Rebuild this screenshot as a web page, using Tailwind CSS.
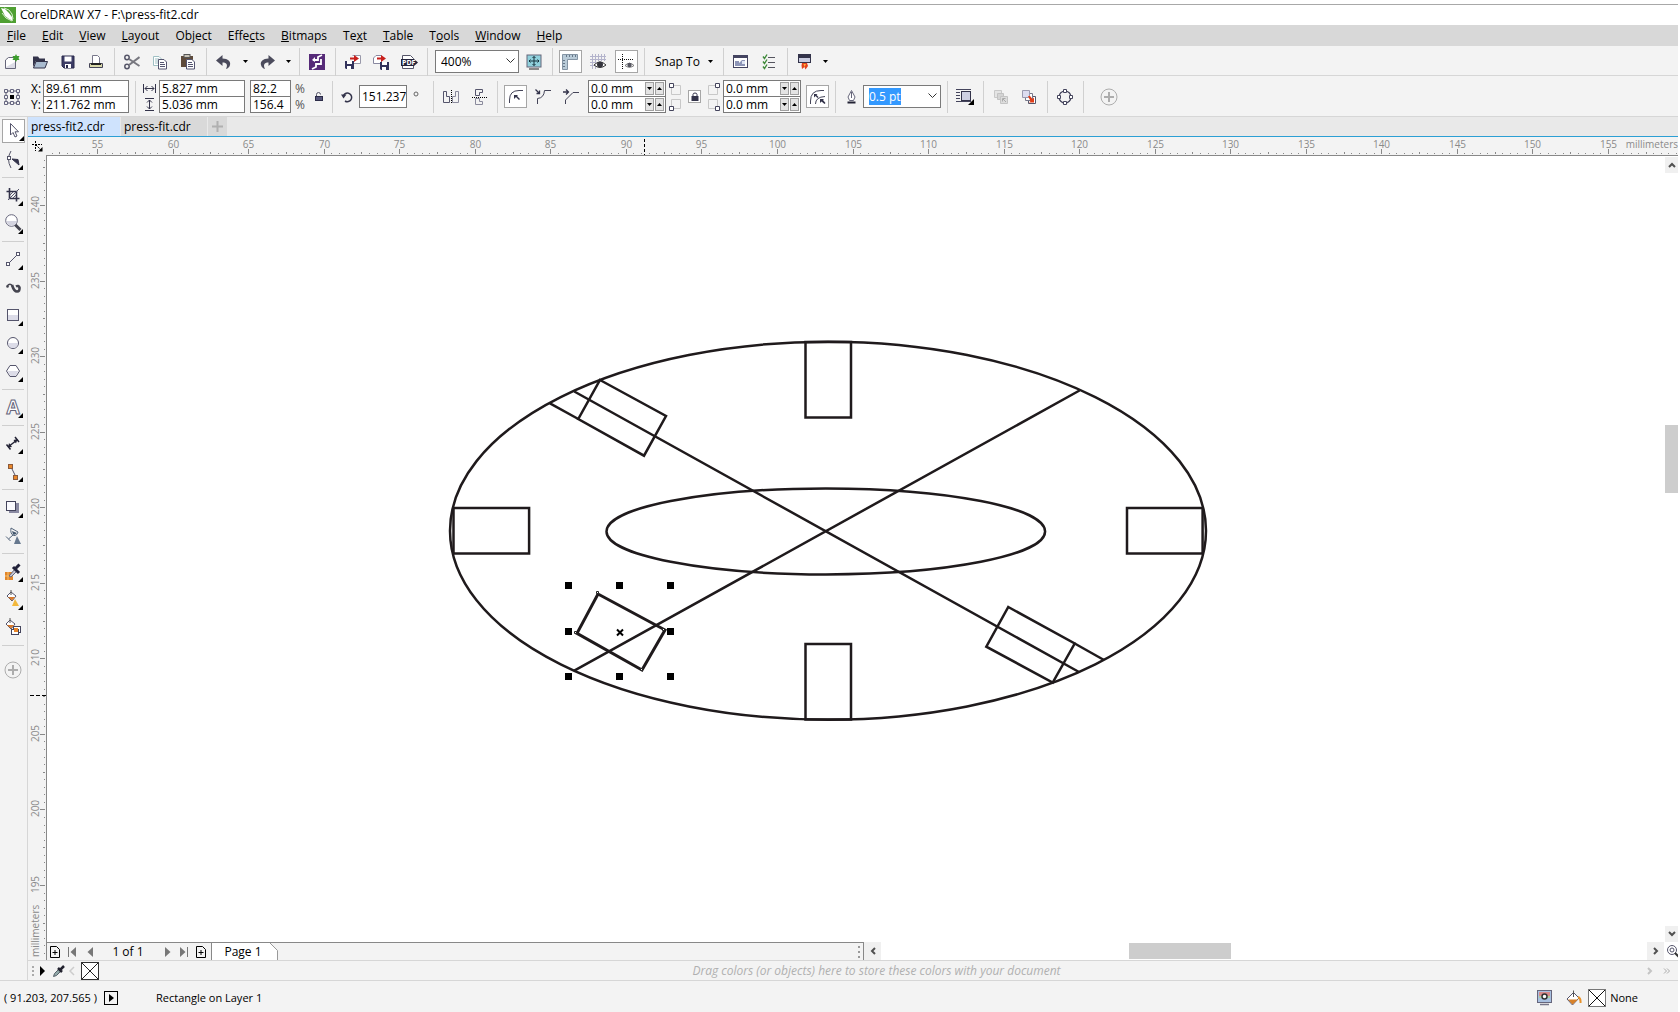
<!DOCTYPE html>
<html lang="en">
<head>
    <meta charset="UTF-8">
    <title>CorelDRAW X7 - F:\press-fit2.cdr</title>
    <script src="https://cdn.jsdelivr.net/npm/@tailwindcss/browser@4"></script>
</head>
<body class="h-screen flex flex-col overflow-hidden bg-white pr-0.5 font-['Open_Sans','Noto_Sans',sans-serif] text-xs text-black">

    <!-- Title bar -->
    <header class="mt-1 h-[21px] shrink-0 flex items-center gap-1 border-t border-[#a8a8a8] bg-white">
        <svg class="w-4 h-4 shrink-0" viewBox="0 0 16 16"><rect width="16" height="16" fill="#4fa032"/><path d="M1 1L5 2L9 6L12 10L13 14L9 12L5 9Z" fill="#fff"/><path d="M4 1L9 3L12 7L13 12M2 6L6 11L12 14" stroke="#d9efcf" fill="none"/></svg>
        <h1>CorelDRAW X7 - F:\press-fit2.cdr</h1>
    </header>

    <!-- Menu bar -->
    <nav class="h-[21px] shrink-0 flex items-center gap-4 pl-[7px] bg-[#d8d8d8]">
        <button><u>F</u>ile</button>
        <button><u>E</u>dit</button>
        <button><u>V</u>iew</button>
        <button><u>L</u>ayout</button>
        <button>Ob<u>j</u>ect</button>
        <button>Effe<u>c</u>ts</button>
        <button><u>B</u>itmaps</button>
        <button>Te<u>x</u>t</button>
        <button><u>T</u>able</button>
        <button>T<u>o</u>ols</button>
        <button><u>W</u>indow</button>
        <button><u>H</u>elp</button>
    </nav>

    <!-- Standard toolbar -->
    <div class="h-[30px] shrink-0 flex items-center pt-0.5 -ml-0.5 bg-[#f3f3f3] border-b border-[#d6d6d6]">
        <button aria-label="New" class="w-7 h-7 grid place-items-center"><svg width="16" height="16" viewBox="0 0 16 16"><path d="M1.500 14.500V6L4.500 3.500H11.500V14.500Z" fill="#fdfdfd" stroke="#66667a"/><path d="M2 13L11 8V14H2Z" fill="#dcdce6"/><path d="M12 0L13 2L15.500 2L14.500 4L15.500 6L13 6L12 8L11 6L8.500 6L9.500 4L8.500 2L11 2Z" fill="#3c9c2c"/></svg></button>
        <button aria-label="Open" class="w-7 h-7 grid place-items-center"><svg width="16" height="16" viewBox="0 0 16 16"><path d="M1 13V2.500H6L7.500 4.500H13V7H4Z" fill="#33334a"/><path d="M4 7.500H15.500L13 14H1.500Z" fill="#a9bbcf" stroke="#33334a"/></svg></button>
        <button aria-label="Save" class="w-7 h-7 grid place-items-center"><svg width="14" height="14" viewBox="0 0 14 14"><path d="M1 1H13V13H3L1 11Z" fill="#3d3d66" stroke="#28284a"/><rect x="3.500" y="1.500" width="7" height="5" fill="#fff"/><rect x="4" y="9" width="6" height="4" fill="#fff"/><rect x="5" y="10" width="2" height="3" fill="#28284a"/></svg></button>
        <button aria-label="Print" class="w-7 h-7 grid place-items-center"><svg width="16" height="16" viewBox="0 0 16 16"><path d="M4.500 9V1.500H9.500L11.500 3.500V9" fill="#fff" stroke="#77778a"/><path d="M1.500 9.500H14.500V13.500H1.500Z" fill="#d8d8a8" stroke="#444458"/><path d="M3 10H13" stroke="#222" stroke-width="2"/></svg></button>
        <i class="w-px h-7 ml-1 mr-[3px] bg-[#d0d0d0]"></i>
        <button aria-label="Cut" class="w-7 h-7 grid place-items-center"><svg width="16" height="16" viewBox="0 0 16 16" fill="none"><circle cx="3" cy="3.500" r="2.200" stroke="#555568" stroke-width="1.500"/><circle cx="3" cy="12.500" r="2.200" stroke="#555568" stroke-width="1.500"/><path d="M5 5L15.500 12M5 11L15.500 3" stroke="#77777f" stroke-width="2"/></svg></button>
        <button aria-label="Copy" class="w-7 h-7 grid place-items-center"><svg width="16" height="16" viewBox="0 0 16 16" fill="#fff"><path d="M1.500 2.500H7L9.500 5V11.500H1.500Z" stroke="#9fc0c4"/><path d="M3 5H7M3 7H6M3 9H6" stroke="#9fc0c4"/><path d="M6.500 5.500H12L14.500 8V15H6.500Z" stroke="#555570"/><path d="M8 8.500H12M8 10.500H13M8 12.500H13" stroke="#555570"/></svg></button>
        <button aria-label="Paste" class="w-7 h-7 grid place-items-center"><svg width="16" height="16" viewBox="0 0 16 16"><rect x="1" y="2" width="12" height="11" fill="#5e4a3a"/><rect x="4" y="0.500" width="6" height="3" fill="#c9c4b8" stroke="#555"/><path d="M6.500 5.500H12L14.500 8V15H6.500Z" fill="#fff" stroke="#555570"/><path d="M8 8.500H12M8 10.500H13M8 12.500H13" stroke="#555570"/></svg></button>
        <i class="w-px h-7 ml-1 mr-[3px] bg-[#d0d0d0]"></i>
        <button aria-label="Undo" class="w-7 h-7 grid place-items-center"><svg width="16" height="16" viewBox="0 0 16 16"><path d="M0 6.500L6.500 1V4.500C12 4.500 15 7.500 14 11C13.500 13 12 14.500 10 15C12 11 11 8.500 6.500 8.500V12Z" fill="#4b4b5c"/></svg></button>
        <button aria-label="Undo history" class="w-[15px] h-7 grid place-items-center"><svg width="5" height="3"><path d="M0 0H5L2.500 3Z"/></svg></button>
        <button aria-label="Redo" class="w-7 h-7 grid place-items-center"><svg width="16" height="16" viewBox="0 0 16 16"><path d="M16 6.500L9.500 1V4.500C4 4.500 1 7.500 2 11C2.500 13 4 14.500 6 15C4 11 5 8.500 9.500 8.500V12Z" fill="#4b4b5c"/></svg></button>
        <button aria-label="Redo history" class="w-3.5 h-7 grid place-items-center"><svg width="5" height="3"><path d="M0 0H5L2.500 3Z"/></svg></button>
        <i class="w-px h-7 ml-1 mr-[3px] bg-[#d0d0d0]"></i>
        <button aria-label="Search content" class="w-7 h-7 grid place-items-center"><svg width="16" height="16" viewBox="0 0 16 16" fill="none"><rect width="16" height="16" fill="#562a78"/><path d="M13 1L9 3V6H4M3 15L7 13V10H12V5" stroke="#fff" stroke-width="1.800"/><path d="M3 6L6 3V8Z" fill="#fff"/></svg></button>
        <i class="w-px h-7 ml-1 mr-[3px] bg-[#d0d0d0]"></i>
        <button aria-label="Import" class="w-7 h-7 grid place-items-center"><svg width="16" height="16" viewBox="0 0 16 16"><path d="M7.500 1.500H15.500V9.500H9" fill="#fff" stroke="#9999aa"/><path d="M0 7H9V15H1L0 14Z" fill="#33335c"/><rect x="2" y="7" width="5" height="3" fill="#fff"/><rect x="2" y="12" width="4" height="3" fill="#fff"/><path d="M5 3.500H9V1L14 4.500L9 8V5.500H5Z" fill="#c8201c"/></svg></button>
        <button aria-label="Export" class="w-7 h-7 grid place-items-center"><svg width="16" height="16" viewBox="0 0 16 16"><path d="M0.500 9.500V4L3 1.500H8.500V9.500Z" fill="#fff" stroke="#8888a0"/><path d="M7 8H16V16H8L7 15Z" fill="#33335c"/><rect x="9" y="8" width="5" height="3" fill="#fff"/><rect x="9" y="13" width="4" height="3" fill="#fff"/><path d="M4 3.500H8V1L13 4.500L8 8V5.500H4Z" fill="#c8201c"/></svg></button>
        <button aria-label="Publish to PDF" class="w-7 h-7 grid place-items-center"><svg width="17" height="16" viewBox="0 0 17 16"><path d="M1.500 14.500V1.500H9.500L12.500 4.500V14.500Z" fill="#fff" stroke="#555568"/><path d="M0 5H13L17 8.500L13 12H0Z" fill="#23233a"/><text x="1" y="11" font-size="7" font-weight="700" fill="#fff">PDF</text></svg></button>
        <i class="w-px h-7 ml-1 mr-[3px] bg-[#d0d0d0]"></i>
        <div class="relative ml-1 w-[84px]">
            <select aria-label="Zoom level" class="w-full h-[23px] pl-[5px] appearance-none bg-white border border-[#7a7a7a]"><option>400%</option><option>200%</option><option>100%</option></select>
            <svg class="absolute right-1 top-2 pointer-events-none" width="9" height="6" fill="none"><path d="M0.500 0.500L4.500 4.500L8.500 0.500" stroke="#333"/></svg>
        </div>
        <button aria-label="Full screen preview" class="ml-px w-7 h-7 grid place-items-center"><svg width="16" height="16" viewBox="0 0 16 16"><rect x="1" y="1" width="14" height="12" fill="#8fd0dc" stroke="#66667a"/><path d="M8 2.500V11.500M3 7H13M6.500 4L8 2.500L9.500 4M6.500 10L8 11.500L9.500 10M4.500 5.500L3 7L4.500 8.500M11.500 5.500L13 7L11.500 8.500" stroke="#16323c" fill="none"/><path d="M3 15H13" stroke="#666" stroke-width="1.500"/></svg></button>
        <i class="w-px h-7 ml-1 mr-[3px] bg-[#d0d0d0]"></i>
        <div class="w-7 flex justify-center"><button aria-label="Show rulers" class="w-[23px] h-[23px] grid place-items-center bg-white border border-[#a6a6a6]"><svg width="16" height="16" viewBox="0 0 16 16"><path d="M0.500 0.500H15.500V5.500H5.500V15.500H0.500Z" fill="#b9cbd8" stroke="#8494a4"/><path d="M4.500 1V3M7.500 1V3M10.500 1V3M13.500 1V3M1 6.500H3M1 9.500H3M1 12.500H3" stroke="#667788"/></svg></button></div>
        <button aria-label="Show grid" class="w-7 h-7 grid place-items-center"><svg width="16" height="16" viewBox="0 0 16 16" fill="none"><path d="M2.500 0V15M5.500 0V15M8.500 0V7M11.500 0V7M14.500 0V7M0 2.500H16M0 5.500H16M0 8.500H5M0 11.500H5" stroke="#b4b4cc"/><path d="M4 11Q10 5 16 11Q10 16 4 11Z" fill="#fff" stroke="#333"/><circle cx="10" cy="10.500" r="3" fill="#33333c"/></svg></button>
        <div class="w-7 flex justify-center"><button aria-label="Show guidelines" class="w-[23px] h-[23px] grid place-items-center bg-white border border-[#a6a6a6]"><svg width="16" height="16" viewBox="0 0 16 16" fill="none"><path d="M4.500 0V16M0 5.500H16" stroke="#111" stroke-dasharray="1 1"/><path d="M7 11.500Q11.500 7 16 11.500Q11.500 15 7 11.500Z" fill="#fff" stroke="#777"/><circle cx="11.500" cy="11" r="2.200" fill="#555560"/></svg></button></div>
        <i class="w-px h-7 ml-1 mr-[3px] bg-[#d0d0d0]"></i>
        <button class="w-[71px] h-7 pl-[7px] pr-1.5 flex items-center justify-between whitespace-nowrap">Snap To <svg width="5" height="3"><path d="M0 0H5L2.500 3Z"/></svg></button>
        <i class="w-px h-7 ml-1 mr-[3px] bg-[#d0d0d0]"></i>
        <button aria-label="Welcome screen" class="w-7 h-7 grid place-items-center"><svg width="16" height="16" viewBox="0 0 16 16"><rect x="0.500" y="1.500" width="14" height="12" fill="#fff" stroke="#444460"/><rect x="1" y="1" width="13" height="3" fill="#444460"/><path d="M2 12V7H6V9L9 6H12V12Z" fill="#8e96b8"/><rect x="9" y="7" width="3" height="3" fill="#dfe6f4"/></svg></button>
        <button aria-label="Options" class="w-7 h-7 grid place-items-center"><svg width="14" height="16" viewBox="0 0 14 16" fill="none"><path d="M6 3.500H13M6 8.500H13M6 13.500H13" stroke="#55555f"/><path d="M1 2.500L2.500 4.500L5 0.500M1 7.500L2.500 9.500L5 5.500M1 12.500L2.500 14.500L5 10.500" stroke="#3f8a3a" stroke-width="1.400"/></svg></button>
        <i class="w-px h-7 ml-1 mr-[3px] bg-[#d0d0d0]"></i>
        <button aria-label="Application launcher" class="w-7 h-7 grid place-items-center"><svg width="14" height="16" viewBox="0 0 14 16"><rect x="0.500" y="0.500" width="12" height="8" fill="#c9cce0" stroke="#33334a"/><rect x="1" y="1" width="11" height="3" fill="#33334a"/><path d="M4 9H9L10 12L7.500 15.500L6.500 13L4 15L3.500 11.500Z" fill="#e2401c"/><path d="M5.500 10H8L6.500 13Z" fill="#ffb13c"/></svg></button>
        <button aria-label="Launcher list" class="w-3 h-7 grid place-items-center"><svg width="5" height="3"><path d="M0 0H5L2.500 3Z"/></svg></button>
    </div>

    <!-- Property bar -->
    <div class="h-[41px] shrink-0 flex items-center pt-px bg-[#f3f3f3] border-b border-[#d6d6d6]">
        <button aria-label="Object origin" class="w-6 h-8 grid place-items-center"><svg width="16" height="16" viewBox="0 0 16 16" fill="none"><path d="M4 2H6M10 2H12M4 14H6M10 14H12M2 4V6M2 10V12M14 4V6M14 10V12" stroke="#555568"/><path d="M0.500 0.500H3.500V3.500H0.500ZM6.500 0.500H9.500V3.500H6.500ZM12.500 0.500H15.500V3.500H12.500ZM0.500 6.500H3.500V9.500H0.500ZM12.500 6.500H15.500V9.500H12.500ZM0.500 12.500H3.500V15.500H0.500ZM6.500 12.500H9.500V15.500H6.500ZM12.500 12.500H15.500V15.500H12.500Z" stroke="#666680"/><rect x="6" y="6" width="4" height="4" fill="#000"/></svg></button>
        <div class="ml-[7px] w-3 flex flex-col leading-4"><label for="posX">X:</label><label for="posY">Y:</label></div>
        <div class="w-[86px] h-[33px] grid grid-rows-2 border border-[#7a7a7a] divide-y divide-[#7a7a7a] bg-white">
            <input id="posX" class="min-w-0 w-full pl-0.5 leading-[15px]" value="89.61 mm">
            <input id="posY" class="min-w-0 w-full pl-0.5 leading-[15px]" value="211.762 mm">
        </div>
        <i class="w-px h-8 ml-1.5 mr-[7px] bg-[#d0d0d0]"></i>
        <div class="w-4 h-[33px] grid grid-rows-2 items-center">
            <svg width="13" height="9" viewBox="0 0 13 9" fill="none"><path d="M0.500 0V9M12.500 0V9M2 4.500H11M4.500 2L2 4.500L4.500 7M8.500 2L11 4.500L8.500 7" stroke="#33334a"/></svg>
            <svg class="ml-0.5" width="9" height="13" viewBox="0 0 9 13" fill="none"><path d="M0 0.500H9M0 12.500H9M4.500 2V11M2 4.500L4.500 2L7 4.500M2 8.500L4.500 11L7 8.500" stroke="#33334a"/></svg>
        </div>
        <div class="w-[86px] h-[33px] grid grid-rows-2 border border-[#7a7a7a] divide-y divide-[#7a7a7a] bg-white">
            <input aria-label="Width" class="min-w-0 w-full pl-0.5 leading-[15px]" value="5.827 mm">
            <input aria-label="Height" class="min-w-0 w-full pl-0.5 leading-[15px]" value="5.036 mm">
        </div>
        <div class="ml-[5px] w-[41px] h-[33px] grid grid-rows-2 border border-[#7a7a7a] divide-y divide-[#7a7a7a] bg-white">
            <input id="scaleX" class="min-w-0 w-full pl-0.5 leading-[15px]" value="82.2">
            <input id="scaleY" class="min-w-0 w-full pl-0.5 leading-[15px]" value="156.4">
        </div>
        <div class="ml-1 w-3 flex flex-col leading-4 text-[#555]"><label for="scaleX">%</label><label for="scaleY">%</label></div>
        <button aria-label="Lock ratio" class="w-6 h-8 grid place-items-center"><svg width="8" height="9" viewBox="0 0 8 9"><path d="M1.500 5V2.500Q1.500 0.500 3.500 0.500T5.500 2.500" fill="none" stroke="#555568"/><rect x="0.500" y="4.500" width="7" height="4" fill="#55557a" stroke="#2c2c48"/></svg></button>
        <i class="w-px h-8 ml-px mr-1 bg-[#d0d0d0]"></i>
        <svg class="ml-1 mr-1.5" width="12" height="12" viewBox="0 0 12 12" fill="none"><path d="M2.500 4.500A4.300 4.300 0 1 1 4 10" stroke="#33334a" stroke-width="1.500"/><path d="M0 3.500H5.500L2.500 7.500Z" fill="#33334a"/></svg>
        <input aria-label="Angle of rotation" class="w-12 h-[23px] pl-0.5 bg-white border border-[#7a7a7a]" value="151.237">
        <svg class="ml-1.5 mb-1.5 self-center" width="6" height="6" fill="none"><circle cx="3" cy="3" r="2" stroke="#666"/></svg>
        <i class="w-px h-8 ml-[14px] mr-[3px] bg-[#d0d0d0]"></i>
        <button aria-label="Mirror horizontally" class="w-7 h-8 grid place-items-center"><svg width="16" height="14" viewBox="0 0 16 14" fill="none"><path d="M0.500 1.500H3.500V6.500H6.500V12.500H0.500Z" stroke="#55556c"/><path d="M15.500 1.500H12.500V6.500H9.500V12.500H15.500Z" stroke="#8a8a9c"/><path d="M8.500 0V14" stroke="#000" stroke-dasharray="1 1"/></svg></button>
        <button aria-label="Mirror vertically" class="w-7 h-8 grid place-items-center"><svg width="15" height="16" viewBox="0 0 15 16" fill="none"><path d="M3.500 0.500H10.500V3.500H7.500V6.500H3.500Z" stroke="#55556c"/><path d="M3.500 15.500H10.500V12.500H7.500V9.500H3.500Z" stroke="#8a8a9c"/><path d="M0 8.500H15" stroke="#000" stroke-dasharray="1 1"/></svg></button>
        <i class="w-px h-8 ml-1 mr-[3px] bg-[#d0d0d0]"></i>
        <div class="w-7 flex justify-center"><button aria-label="Round corner" class="w-[23px] h-[23px] grid place-items-center bg-white border border-[#a6a6a6]"><svg width="15" height="15" viewBox="0 0 15 15" fill="none"><path d="M1.500 14V11Q1.500 1.500 11 1.500H15" stroke="#444458"/><path d="M6 6H10L9 7L12 10L11 11L8 8L6 10Z" fill="#33334a"/></svg></button></div>
        <button aria-label="Scalloped corner" class="w-7 h-8 grid place-items-center"><svg width="16" height="15" viewBox="0 0 16 15" fill="none"><path d="M2.500 15V9.500Q9 9 9.500 1.500H16" stroke="#444458"/><path d="M0.500 0.500L4 4M4.500 1.500V4.500H1.500" stroke="#33334a" stroke-width="1.300"/></svg></button>
        <button aria-label="Chamfered corner" class="w-7 h-8 grid place-items-center"><svg width="16" height="15" viewBox="0 0 16 15" fill="none"><path d="M2.500 15V11L10 3.500H16" stroke="#444458"/><path d="M0 3H5M3 0.500L5.500 3L3 5.500" stroke="#33334a" stroke-width="1.300"/></svg></button>
        <div class="ml-[3px] w-[78px] h-[33px] grid grid-cols-1 grid-rows-2 border border-[#7a7a7a] divide-y divide-[#7a7a7a] bg-white">
            <div class="flex items-center gap-px pr-px"><input aria-label="Top left radius" class="min-w-0 w-0 grow pl-0.5 leading-[15px]" value="0.0 mm"><button aria-label="Less" class="w-[9px] h-[13px] shrink-0 grid place-items-center bg-[#e4e4e4] border border-[#a0a0a0]"><svg width="5" height="3"><path d="M0 0H5L2.500 3Z"/></svg></button><button aria-label="More" class="w-[9px] h-[13px] shrink-0 grid place-items-center bg-[#e4e4e4] border border-[#a0a0a0]"><svg width="5" height="3"><path d="M0 3H5L2.500 0Z"/></svg></button></div>
            <div class="flex items-center gap-px pr-px"><input aria-label="Bottom left radius" class="min-w-0 w-0 grow pl-0.5 leading-[15px]" value="0.0 mm"><button aria-label="Less" class="w-[9px] h-[13px] shrink-0 grid place-items-center bg-[#e4e4e4] border border-[#a0a0a0]"><svg width="5" height="3"><path d="M0 0H5L2.500 3Z"/></svg></button><button aria-label="More" class="w-[9px] h-[13px] shrink-0 grid place-items-center bg-[#e4e4e4] border border-[#a0a0a0]"><svg width="5" height="3"><path d="M0 3H5L2.500 0Z"/></svg></button></div>
        </div>
        <svg class="ml-[3px]" width="13" height="28" viewBox="0 0 13 28" fill="none"><path d="M2.500 2.500H11.500V11.500H2.500ZM2.500 16.500H11.500V25.500H2.500Z" stroke="#c8c8c8"/><path d="M0.500 0.500H4.500V4.500H0.500ZM0.500 23.500H4.500V27.500H0.500Z" fill="#fff" stroke="#44445c"/></svg>
        <button aria-label="Edit corners together" class="mx-1.5 w-[13px] h-[13px] grid place-items-center bg-white border border-[#a6a6a6]"><svg width="8" height="9" viewBox="0 0 8 9"><path d="M2 4V2.500Q2 1 4 1T6 2.500V4" fill="none" stroke="#33334a"/><rect x="0.500" y="4" width="7" height="5" fill="#33334a"/></svg></button>
        <svg class="mr-[3px]" width="13" height="28" viewBox="0 0 13 28" fill="none"><path d="M1.500 2.500H10.500V11.500H1.500ZM1.500 16.500H10.500V25.500H1.500Z" stroke="#c8c8c8"/><path d="M8.500 0.500H12.500V4.500H8.500ZM8.500 23.500H12.500V27.500H8.500Z" fill="#fff" stroke="#44445c"/></svg>
        <div class="w-[78px] h-[33px] grid grid-cols-1 grid-rows-2 border border-[#7a7a7a] divide-y divide-[#7a7a7a] bg-white">
            <div class="flex items-center gap-px pr-px"><input aria-label="Top right radius" class="min-w-0 w-0 grow pl-0.5 leading-[15px]" value="0.0 mm"><button aria-label="Less" class="w-[9px] h-[13px] shrink-0 grid place-items-center bg-[#e4e4e4] border border-[#a0a0a0]"><svg width="5" height="3"><path d="M0 0H5L2.500 3Z"/></svg></button><button aria-label="More" class="w-[9px] h-[13px] shrink-0 grid place-items-center bg-[#e4e4e4] border border-[#a0a0a0]"><svg width="5" height="3"><path d="M0 3H5L2.500 0Z"/></svg></button></div>
            <div class="flex items-center gap-px pr-px"><input aria-label="Bottom right radius" class="min-w-0 w-0 grow pl-0.5 leading-[15px]" value="0.0 mm"><button aria-label="Less" class="w-[9px] h-[13px] shrink-0 grid place-items-center bg-[#e4e4e4] border border-[#a0a0a0]"><svg width="5" height="3"><path d="M0 0H5L2.500 3Z"/></svg></button><button aria-label="More" class="w-[9px] h-[13px] shrink-0 grid place-items-center bg-[#e4e4e4] border border-[#a0a0a0]"><svg width="5" height="3"><path d="M0 3H5L2.500 0Z"/></svg></button></div>
        </div>
        <button aria-label="Relative corner scaling" class="ml-[5px] w-[23px] h-[23px] grid place-items-center bg-white border border-[#a6a6a6]"><svg width="17" height="16" viewBox="0 0 17 16" fill="none"><path d="M1.500 15V12Q1.500 1.500 12 1.500H15M6.500 15Q6.500 8 16 7.500" stroke="#444458"/><path d="M5 5H8.500L7.500 6L9.500 8L8.500 9L6.500 7L5 8.500ZM11 10H15L14 11L16.500 14L15.500 15L12.500 12.500L11 14Z" fill="#33334a"/></svg></button>
        <i class="w-px h-8 ml-1.5 mr-1 bg-[#d0d0d0]"></i>
        <svg class="mx-[7px]" width="9" height="14" viewBox="0 0 9 14" fill="none"><path d="M4.500 0.500L8 7L6.500 10.500H2.500L1 7Z" fill="#fff" stroke="#66667a"/><path d="M4.500 2V8" stroke="#66667a"/><path d="M0.500 12.500H8.500" stroke="#222234" stroke-width="2"/></svg>
        <div class="relative w-[78px]">
            <input id="outlineWidth" aria-label="Outline width" class="w-full h-[23px] pl-[5px] bg-white border border-[#7a7a7a] outline-none selection:bg-[#3399ff] selection:text-white" value="0.5 pt">
            <button aria-label="Outline widths" class="absolute right-1 top-2"><svg width="9" height="6" fill="none"><path d="M0.500 0.500L4.500 4.500L8.500 0.500" stroke="#333"/></svg></button>
        </div>
        <i class="w-px h-8 ml-1.5 mr-[3px] bg-[#d0d0d0]"></i>
        <button aria-label="Wrap text" class="w-7 h-8 grid place-items-center"><svg width="18" height="17" viewBox="0 0 18 17" fill="none"><path d="M0 1.500H15M0 4.500H4M0 7.500H4M0 10.500H4M0 13.500H15" stroke="#44445c"/><rect x="5.500" y="3.500" width="9" height="9" fill="#ced0e2" stroke="#33334a"/><path d="M12 17H18V11Z" fill="#000"/></svg></button>
        <i class="w-px h-8 ml-1 mr-[3px] bg-[#d0d0d0]"></i>
        <button aria-label="To front" class="w-7 h-8 grid place-items-center"><svg width="14" height="14" viewBox="0 0 14 14"><path d="M0.500 0.500H7.500V7.500H0.500Z" fill="#e4e4e4" stroke="#c8c8c8"/><path d="M3.500 3.500H9.500V9.500H3.500Z" fill="#d4d4d4" stroke="#c2c2c2"/><path d="M6.500 6.500H13.500V13.500H6.500Z" fill="#dcdcdc" stroke="#c4c4c4"/><path d="M8.500 8.500H11.500M8.500 8.500V11.500M9 9L12 12" stroke="#aaa"/></svg></button>
        <button aria-label="To back" class="w-7 h-8 grid place-items-center"><svg width="14" height="14" viewBox="0 0 14 14"><path d="M6.500 6.500H13.500V13.500H6.500Z" fill="#fff" stroke="#555568"/><path d="M3.500 3.500H10.500V10.500H3.500Z" fill="#fff" stroke="#77778a"/><path d="M0.500 0.500H7.500V7.500H0.500Z" fill="#dcdcf0" stroke="#9a9ab0"/><path d="M6 6L8 6L10.500 9L12 7.500V12.500H7L8.500 11Z" fill="#e03c18"/></svg></button>
        <i class="w-px h-8 ml-1 mr-[3px] bg-[#d0d0d0]"></i>
        <button aria-label="Convert to curves" class="w-7 h-8 grid place-items-center"><svg width="16" height="16" viewBox="0 0 16 16" fill="#fff"><circle cx="8" cy="8" r="6" fill="none" stroke="#44445c" stroke-width="1.200"/><path d="M6.500 0.500H9.500V3.500H6.500ZM6.500 12.500H9.500V15.500H6.500ZM0.500 6.500H3.500V9.500H0.500ZM12.500 6.500H15.500V9.500H12.500Z" stroke="#44445c"/></svg></button>
        <i class="w-px h-8 ml-1 mr-[3px] bg-[#d0d0d0]"></i>
        <button aria-label="Quick customize" class="ml-2 w-7 h-8 grid place-items-center"><svg width="18" height="18" viewBox="0 0 18 18" fill="none" stroke="#adadad"><circle cx="9" cy="9" r="8"/><path d="M9 4V14M4 9H14" stroke-width="2"/></svg></button>
    </div>

    <div class="grow min-h-0 flex bg-[#f3f3f3]">
        <!-- Toolbox -->
        <aside class="w-7 shrink-0 flex flex-col items-center pr-px border-r border-[#d6d6d6]">
            <button aria-label="Pick" class="relative my-[2px] w-[23px] h-6 bg-white border border-[#a6a6a6] grid place-items-center"><svg width="22" height="22" viewBox="0 0 22 22"><path d="M7.500 3.500V15L10 12.500L12 17L14 16L12 11.800H15.500Z" fill="#fff" stroke="#55556c"/><path d="M16 21H21V16Z"/></svg></button>
            <button aria-label="Shape" class="w-[23px] h-7 pt-0.5 grid place-items-center"><svg width="22" height="22" viewBox="0 0 22 22"><path d="M9 2Q4 10 9 19" fill="none" stroke="#555568"/><rect x="5.500" y="7.500" width="3" height="3" fill="#fff" stroke="#555568"/><path d="M10 10L16 10.500L17 16Z" fill="#33334a" stroke="#33334a"/><path d="M16 21H21V16Z"/></svg></button>
            <i class="w-[22px] h-px mt-1 mb-[3px] bg-[#cfcfcf]"></i>
            <button aria-label="Crop" class="w-[23px] h-7 pt-0.5 grid place-items-center"><svg width="22" height="22" viewBox="0 0 22 22" fill="none"><path d="M7.500 3V13.500H17.500M4.500 6.500H14.500V16.500" stroke="#33334a" stroke-width="1.600"/><path d="M6 15L17 4M8 10L11 7M11 13L14 10" stroke="#55556c"/><path d="M16 21H21V16Z" fill="#000"/></svg></button>
            <button aria-label="Zoom" class="w-[23px] h-7 pt-0.5 grid place-items-center"><svg width="22" height="22" viewBox="0 0 22 22"><path d="M13 11.500L18.500 17" stroke="#44444f" stroke-width="3"/><circle cx="9.500" cy="7.500" r="5.800" fill="#fff" stroke="#66667c"/><path d="M4.500 8H14.500Q13.500 12.500 9.500 12.500T4.500 8Z" fill="#d4d4e0"/><path d="M16 21H21V16Z"/></svg></button>
            <i class="w-[22px] h-px mt-1 mb-[3px] bg-[#cfcfcf]"></i>
            <button aria-label="Freehand" class="w-[23px] h-7 pt-0.5 grid place-items-center"><svg width="22" height="22" viewBox="0 0 22 22" fill="#fff" stroke="#55556c"><path d="M6 15L15 6"/><rect x="4.500" y="13.500" width="3" height="3"/><rect x="14.500" y="3.500" width="3" height="3"/><path d="M16 21H21V16Z" fill="#000" stroke="none"/></svg></button>
            <button aria-label="Artistic media" class="w-[23px] h-7 pt-0.5 grid place-items-center"><svg width="22" height="22" viewBox="0 0 22 22" fill="none"><path d="M5 9Q8 5.500 10.500 9" stroke="#44444f" stroke-width="1.300"/><path d="M10 8Q12 14.500 15 14.500T17.500 10.500Q16.500 8 14 9.500" stroke="#44444f" stroke-width="2.600"/><circle cx="5.500" cy="9.500" r="1.300" fill="#44444f"/></svg></button>
            <button aria-label="Rectangle" class="w-[23px] h-7 pt-0.5 grid place-items-center"><svg width="22" height="22" viewBox="0 0 22 22"><rect x="5.500" y="4.500" width="11" height="11" fill="#fff" stroke="#55556c"/><path d="M6 10H16V15H6Z" fill="#dcdce8"/><path d="M16 21H21V16Z"/></svg></button>
            <button aria-label="Ellipse" class="w-[23px] h-7 pt-0.5 grid place-items-center"><svg width="22" height="22" viewBox="0 0 22 22"><circle cx="11" cy="10" r="5.500" fill="#fff" stroke="#55556c"/><path d="M6 10H16Q15.500 15 11 15T6 10Z" fill="#dcdce8"/><path d="M16 21H21V16Z"/></svg></button>
            <button aria-label="Polygon" class="w-[23px] h-7 pt-0.5 grid place-items-center"><svg width="22" height="22" viewBox="0 0 22 22"><path d="M4.500 10L8 4.500H14L17.500 10L14 15.500H8Z" fill="#fff" stroke="#55556c"/><path d="M5.500 10H16.500L13.500 15H8.500Z" fill="#dcdce8"/><path d="M16 21H21V16Z"/></svg></button>
            <i class="w-[22px] h-px mt-1 mb-[3px] bg-[#cfcfcf]"></i>
            <button aria-label="Text" class="w-[23px] h-7 pt-0.5 grid place-items-center"><svg class="overflow-visible" width="22" height="22" viewBox="0 0 22 22"><text x="11" y="17" text-anchor="middle" font-size="19" font-weight="700" fill="#fff" stroke="#66667c">A</text><path d="M16 21H21V16Z"/></svg></button>
            <i class="w-[22px] h-px mt-1 mb-[3px] bg-[#cfcfcf]"></i>
            <button aria-label="Dimension" class="w-[23px] h-7 pt-0.5 grid place-items-center"><svg width="22" height="22" viewBox="0 0 22 22" fill="none"><path d="M6 14L15 7M4.500 11.500L8.500 16.500M13 4L17 9" stroke="#222234" stroke-width="1.500"/><path d="M6 14.500L7 10L10 14ZM15.500 6L11.500 7L14 10.500Z" fill="#222234"/><path d="M16 21H21V16Z" fill="#000"/></svg></button>
            <button aria-label="Connector" class="w-[23px] h-7 pt-0.5 grid place-items-center"><svg width="22" height="22" viewBox="0 0 22 22"><path d="M9 6L14 16" stroke="#55556c"/><rect x="6.500" y="3.500" width="4" height="4" fill="#e8862a" stroke="#8a5a3c"/><rect x="11.500" y="14.500" width="4" height="4" fill="#e8862a" stroke="#8a5a3c"/><path d="M16 21H21V16Z"/></svg></button>
            <i class="w-[22px] h-px mt-1 mb-[3px] bg-[#cfcfcf]"></i>
            <button aria-label="Drop shadow" class="w-[23px] h-7 pt-0.5 grid place-items-center"><svg width="22" height="22" viewBox="0 0 22 22"><rect x="7" y="6" width="10" height="10" fill="#8a8aa2"/><rect x="4.500" y="4.500" width="9" height="9" fill="#fafafe" stroke="#44445c"/><path d="M16 21H21V16Z"/></svg></button>
            <button aria-label="Transparency" class="w-[23px] h-7 pt-0.5 grid place-items-center"><svg width="22" height="22" viewBox="0 0 22 22" fill="none"><path d="M9 3L16 7Q15 11 11.500 10.500Q8 9 9 3ZM11 10L6.500 14M4 11.500L8.500 16" stroke="#55667c"/><path d="M10 6L15 8Q13 10.500 11 9.500Z" fill="#44586e"/><path d="M15 11L19 19H12Z" fill="#66788e"/></svg></button>
            <i class="w-[22px] h-px mt-1 mb-[3px] bg-[#cfcfcf]"></i>
            <button aria-label="Color eyedropper" class="w-[23px] h-7 pt-0.5 grid place-items-center"><svg width="22" height="22" viewBox="0 0 22 22"><rect x="3" y="11" width="8" height="8" fill="#e2862a"/><path d="M6 11V19M3 15H11" stroke="#f6c070"/><path d="M7 15L13 8L15 10L9 16Z" fill="#c4c4d0" stroke="#66667c"/><path d="M11 6L17 12M13 8L17.500 3.500" stroke="#22223a" stroke-width="3"/><path d="M16 21H21V16Z"/></svg></button>
            <button aria-label="Interactive fill" class="w-[23px] h-7 pt-0.5 grid place-items-center"><svg width="22" height="22" viewBox="0 0 22 22"><path d="M5 7L9 3L14 7L10 12Z" fill="#fff" stroke="#55556c"/><path d="M6 8H13L10 11.500Z" fill="#d8782a"/><path d="M9 1V6" stroke="#555"/><path d="M13 10L17 17H10Z" fill="#f2b83c"/><path d="M16 21H21V16Z"/></svg></button>
            <button aria-label="Smart fill" class="w-[23px] h-7 pt-0.5 grid place-items-center"><svg width="22" height="22" viewBox="0 0 22 22"><path d="M4 7L8 3L13 7L9 12Z" fill="#fff" stroke="#55556c"/><path d="M5 8H12L9 11.500Z" fill="#d8782a"/><path d="M8 1V6" stroke="#555"/><rect x="11.500" y="9.500" width="7" height="6" fill="#fff" stroke="#44445c"/><rect x="9.500" y="12.500" width="7" height="5" fill="#fff" stroke="#44445c"/><rect x="12" y="11" width="4" height="4" fill="#e8862a"/></svg></button>
            <i class="w-[22px] h-px mt-1 mb-[3px] bg-[#cfcfcf]"></i>
            <button aria-label="Customize toolbox" class="mt-1.5 w-[23px] h-7 pt-0.5 grid place-items-center"><svg width="18" height="18" viewBox="0 0 18 18" fill="none" stroke="#adadad"><circle cx="9" cy="9" r="8"/><path d="M9 4V14M4 9H14" stroke-width="2"/></svg></button>
        </aside>

        <main class="grow min-w-0 flex flex-col">
            <!-- Document tabs -->
            <div class="h-5 shrink-0 flex items-stretch gap-px bg-[#e9e9e9] border-b border-[#2b9fd4]">
                <button class="w-[92px] pl-[3px] text-left bg-[#cfe3fd]">press-fit2.cdr</button>
                <button class="w-[86px] pl-[3px] text-left bg-[#d9d9d9]">press-fit.cdr</button>
                <button aria-label="New document" class="w-[19px] grid place-items-center bg-[#d9d9d9]"><svg width="11" height="11" stroke="#b0b0b0" stroke-width="2"><path d="M5.500 0V11M0 5.500H11"/></svg></button>
            </div>

            <!-- Top ruler -->
            <div class="h-[19px] shrink-0 flex">
                <div class="w-[18px] shrink-0 pl-1 pt-1"><svg width="12" height="12" viewBox="0 0 12 12" fill="none"><path d="M0 3.500H10M3.500 0V10M4 4L9 9" stroke="#000" stroke-dasharray="2 1"/><path d="M10.500 6V10.500H6Z" fill="#000"/></svg></div>
                <div class="grow min-w-0 border-b border-[#888]"><svg id="rulerX" class="w-full h-[18px]"></svg></div>
            </div>

            <div class="grow min-h-0 flex">
                <!-- Left ruler -->
                <div class="w-[19px] shrink-0 border-r border-[#888]"><svg id="rulerY" class="w-full h-full"></svg></div>

                <div class="grow min-w-0 flex flex-col bg-white">
                    <div class="grow min-h-0 flex">
                        <!-- Drawing window, page coordinates start at 47,156 -->
                        <svg class="grow min-w-0 h-full" fill="none" stroke="#1f1a1c" stroke-width="2.500">
                            <g transform="translate(-47 -156)">
                                <ellipse cx="828" cy="530.700" rx="378" ry="189"/>
                                <ellipse cx="825.800" cy="531.400" rx="219.300" ry="43"/>
                                <rect x="805.500" y="342" width="45.500" height="75.500"/>
                                <rect x="805.500" y="644" width="45.500" height="75.500"/>
                                <rect x="453.500" y="508" width="75.600" height="45.500"/>
                                <rect x="1127" y="508" width="75.600" height="45.500"/>
                                <path d="M574.300 391.500L1079 672M574.300 670.700L1079.500 390.500"/>
                                <path d="M600 380L666 416L644 455.700L578.300 419Z"/>
                                <path d="M578.300 419L550 403.300"/>
                                <path d="M1008.300 607L1074.700 643.500L1052.700 682.500L986.300 646.700Z"/>
                                <path d="M1074.700 643.500L1104 660"/>
                                <path d="M598 594L665 630L642 670L577 633.300Z" stroke-width="3"/>
                            </g>
                            <!-- Selection handles -->
                            <g id="handles" transform="translate(-47 -156)" fill="#000" stroke="none"></g>
                            <g transform="translate(-47 -156)" stroke="#000" stroke-width="2"><path d="M617 629.500L623 635.500M623 629.500L617 635.500"/></g>
                            <g transform="translate(-47 -156)" fill="#fff" stroke="#222" stroke-width="1"><path d="M596.500 591.500h2v2h-2ZM574.500 631.500h2v2h-2ZM662.500 628.500h2v2h-2ZM640.500 668.500h2v2h-2Z"/></g>
                        </svg>
                        <!-- Vertical scroll bar -->
                        <div class="w-[13px] shrink-0 flex flex-col pt-px">
                            <button aria-label="Scroll up" class="h-4 grid place-items-center bg-[#f0f0f0]"><svg width="8" height="6" fill="none"><path d="M1 5L4 2L7 5" stroke="#505050" stroke-width="2"/></svg></button>
                            <div class="grow"><div class="h-[33.5%]"></div><div class="h-[9%] bg-[#cdcdcd]"></div></div>
                            <button aria-label="Scroll down" class="h-4 grid place-items-center bg-[#f0f0f0]"><svg width="8" height="6" fill="none"><path d="M1 1L4 4L7 1" stroke="#505050" stroke-width="2"/></svg></button>
                        </div>
                    </div>

                    <!-- Page navigator -->
                    <div class="h-[18px] shrink-0 flex items-stretch">
                        <div class="w-[817px] flex items-stretch bg-[#f3f3f3] border-t border-r border-[#888]">
                            <button aria-label="Add page before" class="ml-0.5 w-3 grid place-items-center"><svg width="10" height="12" viewBox="0 0 10 12" fill="none" stroke="#000"><path d="M0.500 0.500H6.500L9.500 3.500V11.500H0.500ZM5 4V9M2.500 6.500H7.500"/></svg></button>
                            <button aria-label="First page" class="ml-[3px] w-4 grid place-items-center"><svg width="8" height="10" fill="#777"><path d="M0 0H1V10H0ZM8 0V10L2.500 5Z"/></svg></button>
                            <button aria-label="Previous page" class="w-5 grid place-items-center"><svg width="6" height="10" fill="#777"><path d="M6 0V10L0.500 5Z"/></svg></button>
                            <span class="w-14 self-center pt-px text-center">1 of 1</span>
                            <button aria-label="Next page" class="w-6 grid place-items-center"><svg width="6" height="10" fill="#777"><path d="M0 0V10L5.500 5Z"/></svg></button>
                            <button aria-label="Last page" class="w-2 grid place-items-center"><svg width="8" height="10" fill="#777"><path d="M0 0V10L5.500 5ZM7 0H8V10H7Z"/></svg></button>
                            <button aria-label="Add page after" class="ml-[7px] w-3 grid place-items-center"><svg width="10" height="12" viewBox="0 0 10 12" fill="none" stroke="#000"><path d="M0.500 0.500H6.500L9.500 3.500V11.500H0.500ZM5 4V9M2.500 6.500H7.500"/></svg></button>
                            <button class="relative ml-1 w-[67px] pr-1 border-l border-[#888] leading-4"><svg class="absolute inset-0" width="67" height="17" viewBox="0 0 67 17"><path d="M0 0H58L65.500 7.500V17H0Z" fill="#fff"/><path d="M58 0L65.500 7.500V17" fill="none" stroke="#999"/></svg><span class="relative">Page 1</span></button>
                            <svg class="ml-auto mr-[3px] self-center" width="2" height="12" fill="#999"><path d="M0 0H2V2H0ZM0 5H2V7H0ZM0 10H2V12H0Z"/></svg>
                        </div>
                        <button aria-label="Scroll left" class="w-[17px] grid place-items-center bg-[#f0f0f0]"><svg width="6" height="8" fill="none"><path d="M5 1L2 4L5 7" stroke="#505050" stroke-width="2"/></svg></button>
                        <div class="grow flex pt-px pb-px"><div class="w-[32.4%]"></div><div class="w-[13.3%] bg-[#cdcdcd]"></div></div>
                        <button aria-label="Scroll right" class="w-[17px] grid place-items-center bg-[#f0f0f0]"><svg width="6" height="8" fill="none"><path d="M1 1L4 4L1 7" stroke="#505050" stroke-width="2"/></svg></button>
                        <button aria-label="Navigator" class="w-[14px] overflow-hidden"><svg class="ml-0.5" width="12" height="14" viewBox="0 0 12 14" fill="none" stroke="#55556c"><circle cx="6" cy="6" r="4.500"/><circle cx="6" cy="6" r="2"/><path d="M9 9L13 13" stroke="#333" stroke-width="2"/></svg></button>
                    </div>
                </div>
            </div>

            <!-- Document palette -->
            <div class="h-5 shrink-0 flex items-center border-t border-[#d6d6d6]">
                <svg class="ml-1" width="2" height="10" fill="#aaa"><path d="M0 0H2V2H0ZM0 4H2V6H0ZM0 8H2V10H0Z"/></svg>
                <button aria-label="Palette menu" class="ml-1.5 w-[5px] h-4 grid place-items-center"><svg width="5" height="10"><path d="M0 0V10L5 5Z"/></svg></button>
                <button aria-label="Palette eyedropper" class="ml-2 w-3 h-4 grid place-items-center"><svg width="12" height="12" viewBox="0 0 12 12"><path d="M0.500 11.500L1.500 8.500L6 4L8 6L3.500 10.500Z" fill="#8fa6a6" stroke="#55606a"/><path d="M5 3L9 7M7.500 4.500L11 1" stroke="#22222f" stroke-width="2.500"/></svg></button>
                <button aria-label="Scroll palette left" class="ml-1 w-1.5 h-4 grid place-items-center"><svg width="6" height="10" fill="none"><path d="M5 1L1 5L5 9" stroke="#ccc" stroke-width="1.500"/></svg></button>
                <button aria-label="No color" class="ml-1.5 w-[18px] h-[18px] bg-white border border-[#333]"><svg width="16" height="16" stroke="#222"><path d="M0 0L16 16M16 0L0 16"/></svg></button>
                <p class="grow pl-2 text-center italic text-[#b0b0b0]">Drag colors (or objects) here to store these colors with your document</p>
                <button aria-label="Scroll palette right" class="w-2 h-4 grid place-items-center"><svg width="6" height="8" fill="none"><path d="M1 1L4 4L1 7" stroke="#c4c4c4" stroke-width="2"/></svg></button>
                <button aria-label="More colors" class="mx-2 w-2 h-4 grid place-items-center"><svg width="7" height="6" fill="none"><path d="M1 0.500L3.500 3L1 5.500M4 0.500L6.500 3L4 5.500" stroke="#aaa"/></svg></button>
            </div>
        </main>
    </div>

    <!-- Status bar -->
    <footer class="h-8 shrink-0 flex items-center pt-[3px] pl-1 pr-10 bg-[#f3f3f3] border-t border-[#d6d6d6]">
        <span class="w-[100px] whitespace-nowrap text-[11px]">( 91.203, 207.565 )</span>
        <button aria-label="Cursor details" class="w-[14px] h-[14px] grid place-items-center border border-black"><svg width="5" height="8"><path d="M0 0V8L5 4Z"/></svg></button>
        <span class="ml-[38px] text-[11px]">Rectangle on Layer 1</span>
        <svg class="ml-auto mr-[14px]" width="15" height="16" viewBox="0 0 15 16"><rect x="0.500" y="0.500" width="14" height="12" fill="#a8c0e0" stroke="#66667c"/><rect x="2" y="2" width="11" height="4" fill="#d88a8a"/><rect x="2" y="6" width="11" height="2" fill="#a8cca0"/><circle cx="7.500" cy="6.500" r="2.500" fill="#fff" stroke="#333" stroke-width="1.500"/><path d="M3 14.500H12" stroke="#77778a" stroke-width="1.500"/></svg>
        <svg class="mr-1.5" width="16" height="16" viewBox="0 0 16 16"><path d="M1 9L7.500 2.500L13 8L6.500 15Z" fill="#fff" stroke="#55556c"/><path d="M2 9.500H12L6.500 14.500Z" fill="#d8822a"/><path d="M7.500 0.500V7" stroke="#555"/><path d="M12 7Q15 8 14.500 13" fill="none" stroke="#e8922a" stroke-width="2"/></svg>
        <span class="w-[18px] h-[18px] bg-white border border-[#777]"><svg width="16" height="16" stroke="#111"><path d="M0 0L16 16M16 0L0 16"/></svg></span>
        <span class="ml-1 text-[11px]">None</span>
    </footer>

    <script>
        const NS = 'http://www.w3.org/2000/svg';
        const MM = 15.11; // pixels per millimeter at 400%

        function add(parent, tag, attrs, text) {
            const el = document.createElementNS(NS, tag);
            for (const key in attrs) el.setAttribute(key, attrs[key]);
            if (text) el.textContent = text;
            parent.appendChild(el);
        }

        // top ruler, a tick every half millimeter
        const rulerX = document.getElementById('rulerX');
        for (let i = 0; i <= 228; i++) {
            const mm = 52 + i / 2;
            const x = Math.round(51 + (mm - 55) * MM) + 0.5;
            const len = mm % 5 === 0 ? 5 : mm % 2.5 === 0 ? 2 : 1;
            add(rulerX, 'path', { d: `M${x} 17v-${len}`, stroke: '#888' });
            if (mm % 5 === 0 && mm < 160) add(rulerX, 'text', { x: x, y: 11, 'text-anchor': 'middle', 'font-size': 10, fill: '#8a8a8a' }, mm);
        }
        add(rulerX, 'text', { x: '100%', y: 11, 'text-anchor': 'end', 'font-size': 10, fill: '#8a8a8a' }, 'millimeters');
        add(rulerX, 'path', { d: 'M598.500 2v16', stroke: '#000', 'stroke-dasharray': '3 2' });

        // left ruler
        const rulerY = document.getElementById('rulerY');
        for (let i = 0; i <= 106; i++) {
            const mm = 243 - i / 2;
            const y = Math.round(49 + (240 - mm) * MM) + 0.5;
            const len = mm % 5 === 0 ? 5 : mm % 2.5 === 0 ? 2 : 1;
            add(rulerY, 'path', { d: `M17 ${y}h-${len}`, stroke: '#888' });
            if (mm % 5 === 0 && mm > 190) add(rulerY, 'text', { transform: `translate(11 ${y - 1}) rotate(-90)`, 'text-anchor': 'middle', 'font-size': 10, fill: '#8a8a8a' }, mm);
        }
        add(rulerY, 'text', { transform: 'translate(11 801) rotate(-90)', 'font-size': 10, fill: '#8a8a8a' }, 'millimeters');
        add(rulerY, 'path', { d: 'M2 539.500h16', stroke: '#000', 'stroke-dasharray': '4 2' });

        // eight handles around the selected rectangle
        const handles = document.getElementById('handles');
        [586, 632, 677].forEach((y, row) => {
            [568, 619, 670].forEach((x, col) => {
                if (row === 1 && col === 1) return;
                add(handles, 'rect', { x: x - 3, y: y - 4, width: 7, height: 7 });
            });
        });

        const outlineWidth = document.getElementById('outlineWidth');
        outlineWidth.focus();
        outlineWidth.select();
    </script>
</body>
</html>
